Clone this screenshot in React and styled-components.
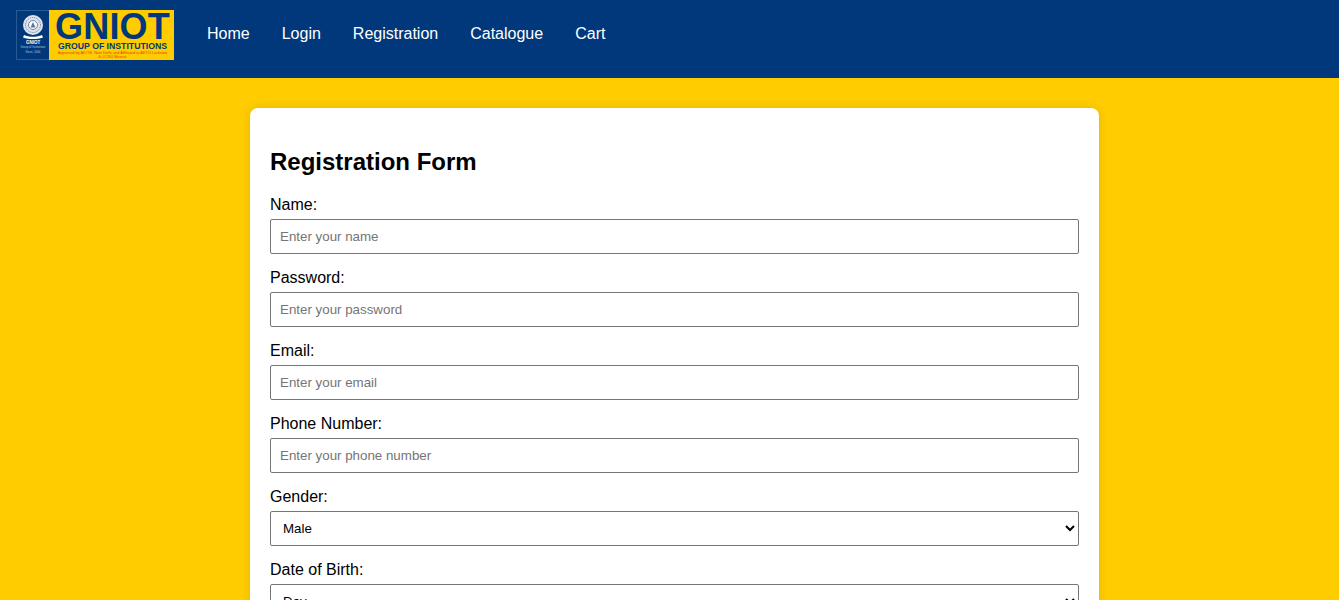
import React from "react";
import styled, { createGlobalStyle } from "styled-components";

const Global = createGlobalStyle`
  html, body { margin: 0; padding: 0; height: 100%; overflow: hidden; }
  body { background: #ffcc00; font-family: "Liberation Sans", Arial, sans-serif; color: #000; }
  * { box-sizing: border-box; }
`;

const Header = styled.header`
  height: 78px;
  background: #00387b;
  display: flex;
  align-items: flex-start;
  padding: 10px 16px 0;
  gap: 33px;
`;

const Logo = styled.div`
  display: flex;
  width: 158px;
  height: 50px;
  flex: none;
`;

const LogoSeal = styled.div`
  width: 33px;
  flex: none;
  background: #00387b;
  border: 1px solid #2a5a92;
  border-right: none;
  display: flex;
  flex-direction: column;
  align-items: center;
  padding-top: 4px;
  color: #fff;
  white-space: nowrap;
  overflow: hidden;
`;

const SealName = styled.div`
  font-size: 4.5px;
  font-weight: 700;
  line-height: 5px;
`;

const SealLine = styled.div`
  font-size: 2.8px;
  line-height: 5px;
  color: #b9c8dc;
`;

const LogoPlate = styled.div`
  flex: 1;
  min-width: 0;
  padding-left: 2px;
  background: #ffcc00;
  display: flex;
  flex-direction: column;
  align-items: center;
  color: #00387b;
  white-space: nowrap;
`;

const LogoTitle = styled.div`
  font-size: 36px;
  line-height: 28px;
  height: 28px;
  margin-top: 3px;
  letter-spacing: 0.2px;
  font-weight: 700;
`;

const LogoSub = styled.div`
  font-size: 8.7px;
  line-height: 8px;
  font-weight: 700;
  margin-top: 1px;
`;

const LogoNote = styled.div`
  font-size: 3.9px;
  line-height: 4px;
  margin-top: 1px;
  color: #e2401a;
  text-align: center;
`;

const Nav = styled.nav`
  display: flex;
  gap: 32px;
  padding-top: 15px;
`;

const NavLink = styled.a`
  color: #fff;
  font-size: 16px;
  line-height: 18px;
  text-decoration: none;
`;

const Main = styled.main`
  display: flex;
  justify-content: center;
  padding: 30px 0 40px 10px;
`;

const Card = styled.form`
  width: 849px;
  background: #fff;
  border-radius: 8px;
  padding: 40px 20px 20px;
  box-shadow: 0 0 10px rgba(0, 0, 0, 0.1);
`;

const Title = styled.h2`
  margin: 0 0 20px;
  font-size: 24px;
  line-height: 28px;
  font-weight: 700;
`;

const Field = styled.div`
  display: flex;
  flex-direction: column;
  margin-bottom: 15px;
`;

const Label = styled.label`
  font-size: 16px;
  line-height: 18px;
  margin-bottom: 5px;
`;

const Input = styled.input`
  height: 35px;
  width: 100%;
  padding: 0 9px;
  border: 1px solid #767676;
  border-radius: 2px;
  font-family: "Liberation Sans", sans-serif;
  font-size: 13.33px;
  background: #fff;
  &::placeholder { color: #757575; }
`;

const Select = styled.select`
  height: 35px;
  width: 100%;
  padding: 0 8px;
  border: 1px solid #767676;
  border-radius: 2px;
  font-family: "Liberation Sans", sans-serif;
  font-size: 13.33px;
  background: #fff;
  color: #000;
`;

const Seal = () => (
  <svg width="24" height="25" viewBox="0 0 24 25">
    <circle cx="12" cy="10" r="10" fill="#dfe4ec" />
    <circle cx="12" cy="10" r="7.5" fill="none" stroke="#5f7797" strokeWidth="1" strokeDasharray="1 1" />
    <circle cx="12" cy="10" r="4.5" fill="#fff" stroke="#6f86a8" strokeWidth="1" />
    <path d="M9.5 12.5 12 7l2.5 5.5z" fill="#5f7797" />
    <path d="M3 20c5 2.4 13 2.4 18 0l1 2.4c-6 2.2-14 2.2-20 0z" fill="#fff" />
  </svg>
);

const links = ["Home", "Login", "Registration", "Catalogue", "Cart"];

const fields = [
  ["Name:", "text", "Enter your name"],
  ["Password:", "password", "Enter your password"],
  ["Email:", "email", "Enter your email"],
  ["Phone Number:", "tel", "Enter your phone number"],
];

export default function App() {
  return (
    <>
      <Global />
      <Header>
        <Logo>
          <LogoSeal>
            <Seal />
            <SealName>GNIOT</SealName>
            <SealLine>Group of Institutions</SealLine>
            <SealLine>Since, 2004</SealLine>
          </LogoSeal>
          <LogoPlate>
            <LogoTitle>GNIOT</LogoTitle>
            <LogoSub>GROUP OF INSTITUTIONS</LogoSub>
            <LogoNote>
              Approved by AICTE, New Delhi and Affiliated to AKTU Lucknow
              <br />& CCSU Meerut
            </LogoNote>
          </LogoPlate>
        </Logo>
        <Nav>
          {links.map((l) => (
            <NavLink href="#" key={l}>{l}</NavLink>
          ))}
        </Nav>
      </Header>
      <Main>
        <Card>
          <Title>Registration Form</Title>
          {fields.map(([label, type, ph]) => (
            <Field key={label}>
              <Label>{label}</Label>
              <Input type={type} placeholder={ph} />
            </Field>
          ))}
          <Field>
            <Label>Gender:</Label>
            <Select defaultValue="Male">
              <option>Male</option>
              <option>Female</option>
              <option>Other</option>
            </Select>
          </Field>
          <Field>
            <Label>Date of Birth:</Label>
            <Select defaultValue="Day">
              <option>Day</option>
            </Select>
          </Field>
        </Card>
      </Main>
    </>
  );
}
